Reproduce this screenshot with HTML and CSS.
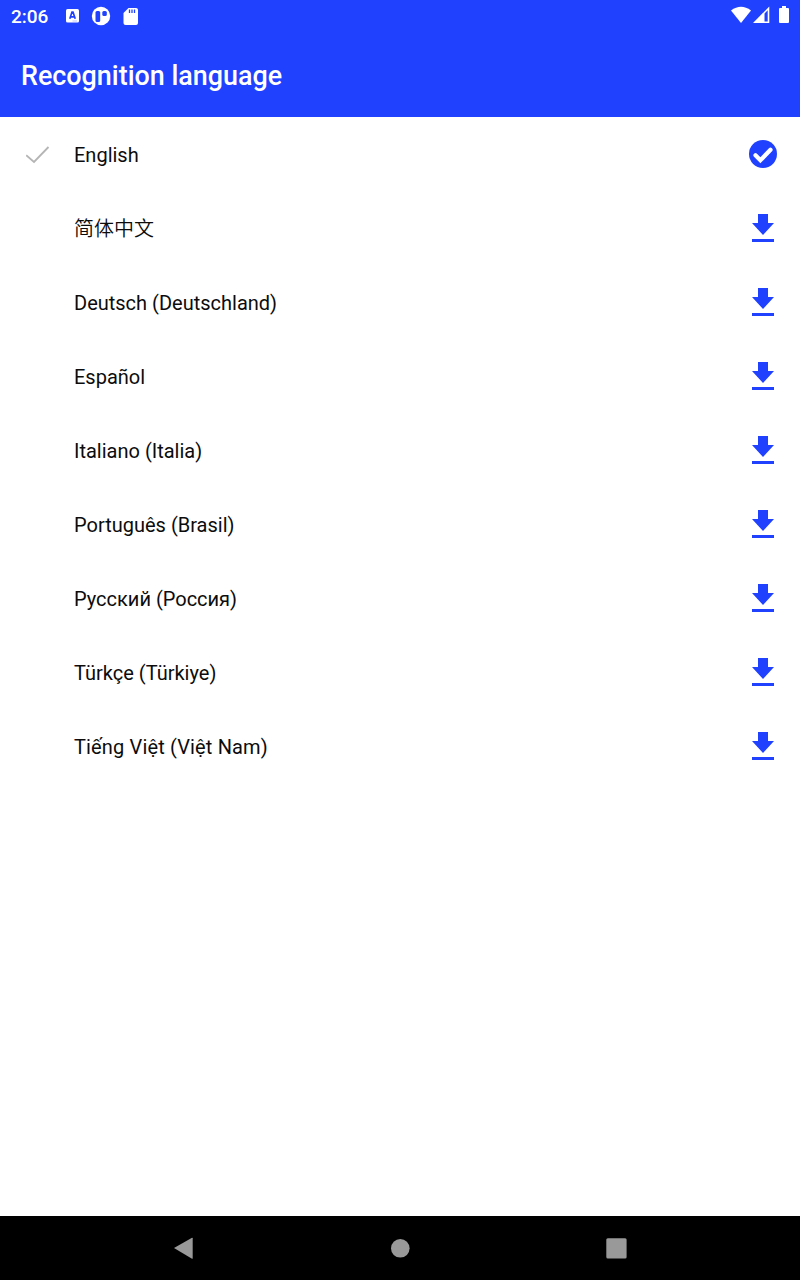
FILE: index.html
```html
<!DOCTYPE html>
<html lang="en">
  <head>
    <meta charset="utf-8">
    <meta name="viewport" content="width=device-width, initial-scale=1">
    <title>Recognition language</title>
    <link rel="stylesheet" href="styles.css">
  </head>
  <body>
<svg class="defs">
  <symbol id="download" viewBox="0 0 28 28">
    <path d="M9 0h10v9h6L14 21 3 9h6z M3 25h22v3H3z"/>
  </symbol>
</svg>
<div class="page">
  <header>
    <div class="statusBar">
      <span class="clock">2:06</span>
      <svg class="notifications" width="74" height="20" viewBox="65 6 74 20">
        <rect x="66" y="9" width="13" height="13.500" rx="1.500" fill="#fff"/>
        <path d="M69.800 18.700l2.200-6.700h1l2.200 6.700M70.500 16.800h4" fill="none" stroke="#2042ff" stroke-width="1.700"/>
        <path d="M72.500 21h4.500" stroke="#a9b5ff" stroke-width=".8"/>
        <circle cx="101" cy="16" r="9.200" fill="#fff"/>
        <rect x="95.500" y="11" width="4.700" height="11" rx="1.500" fill="#2042ff"/>
        <rect x="102.300" y="11" width="4.500" height="5" rx="1.500" fill="#2042ff"/>
        <path d="M128.500 8H136q2 0 2 2v13q0 2-2 2h-10.500q-2 0-2-2V13z" fill="#fff"/>
        <path d="M129.500 9.500v3.500M132 9.500v3.500M134.500 9.500v3.500" stroke="#2042ff" stroke-width="1.300"/>
      </svg>
      <svg class="signals" width="60" height="20" viewBox="730 5 60 20" fill="#fff">
        <path d="M731 10.500Q741 3 751 10.500L741 23z"/>
        <path fill-rule="evenodd" d="M769.300 6.500V23H753z M764.500 13.500V21.500H767.700V10.300z"/>
        <path d="M782 6h4v2h2q1 0 1 1v13q0 1-1 1h-8q-1 0-1-1V9q0-1 1-1h2z"/>
      </svg>
    </div>
    <h1>Recognition language</h1>
  </header>
  <ul class="languages">
    <li>
      <svg class="selected" width="24" height="18"><path d="M.2 9.300L8 16 22.500 1"/></svg>
      <span>English</span>
      <svg class="action" viewBox="0 0 28 28">
        <circle cx="14" cy="14" r="14"/>
        <path class="tick" d="M6.500 15.300l4.900 5L21.500 9.700"/>
      </svg>
    </li>
    <li><span class="chinese" lang="zh-CN">简体中文</span><svg class="action"><use href="#download"/></svg></li>
    <li><span>Deutsch (Deutschland)</span><svg class="action"><use href="#download"/></svg></li>
    <li><span>Español</span><svg class="action"><use href="#download"/></svg></li>
    <li><span>Italiano (Italia)</span><svg class="action"><use href="#download"/></svg></li>
    <li><span>Português (Brasil)</span><svg class="action"><use href="#download"/></svg></li>
    <li><span>Русский (Россия)</span><svg class="action"><use href="#download"/></svg></li>
    <li><span>Türkçe (Türkiye)</span><svg class="action"><use href="#download"/></svg></li>
    <li><span class="vietnamese">Tiếng Việt (Việt Nam)</span><svg class="action"><use href="#download"/></svg></li>
  </ul>
  <nav>
    <svg width="24" height="24"><path d="M3 12L21 1.700q.7-.2.700.5v20q0 .7-.7.500z"/></svg>
    <svg width="24" height="24"><circle cx="12.300" cy="12.300" r="9.300"/></svg>
    <svg width="24" height="24"><rect x="2.300" y="2.300" width="20.300" height="20.300" rx="1.500"/></svg>
  </nav>
</div>
  </body>
</html>
```
FILE: styles.css
```css
* {
  box-sizing: border-box;
  margin: 0px;
  padding: 0px;
}
:root {
  --main: #2042ff;
}
body {
  font-family: Roboto, "Noto Sans CJK SC", sans-serif;
  background-color: white;
  color: #0c0c0c;
}
svg {
  display: block;
  flex-shrink: 0;
}
.defs {
  display: none;
}
.page {
  height: 100vh;
  display: flex;
  flex-direction: column;
}
header {
  height: 117px;
  background-color: var(--main);
  color: white;
}
.statusBar {
  height: 32px;
  padding: 0 10px 0 11px;
  display: flex;
  align-items: center;
}
.clock {
  width: 54px;
  font-size: 19px;
  font-weight: 500;
}
.signals {
  margin-left: auto;
  margin-top: -2px;
}
h1 {
  padding-left: 21px;
  font-size: 26.900px;
  font-weight: 500;
  line-height: 88px;
}
.languages {
  flex: 1;
  list-style: none;
}
.languages li {
  height: 74px;
  padding: 0 23px 0 74px;
  display: flex;
  align-items: center;
  font-size: 20px;
}
.languages span {
  padding-top: 2px;
}
.languages .chinese {
  padding-top: 0;
  padding-bottom: 2px;
  font-weight: 350;
}
.vietnamese {
  letter-spacing: .15px;
}
.selected {
  margin-left: -48px;
  margin-right: 24px;
  margin-top: 1px;
  fill: none;
  stroke: #b5b5b5;
  stroke-width: 1.800;
}
.action {
  width: 28px;
  height: 28px;
  margin-left: auto;
  fill: var(--main);
}
.tick {
  fill: none;
  stroke: white;
  stroke-width: 4.200;
  stroke-linecap: round;
}
nav {
  height: 64px;
  padding: 0 172px 0 171px;
  background-color: black;
  display: flex;
  justify-content: space-between;
  align-items: center;
  fill: #999;
}
```
